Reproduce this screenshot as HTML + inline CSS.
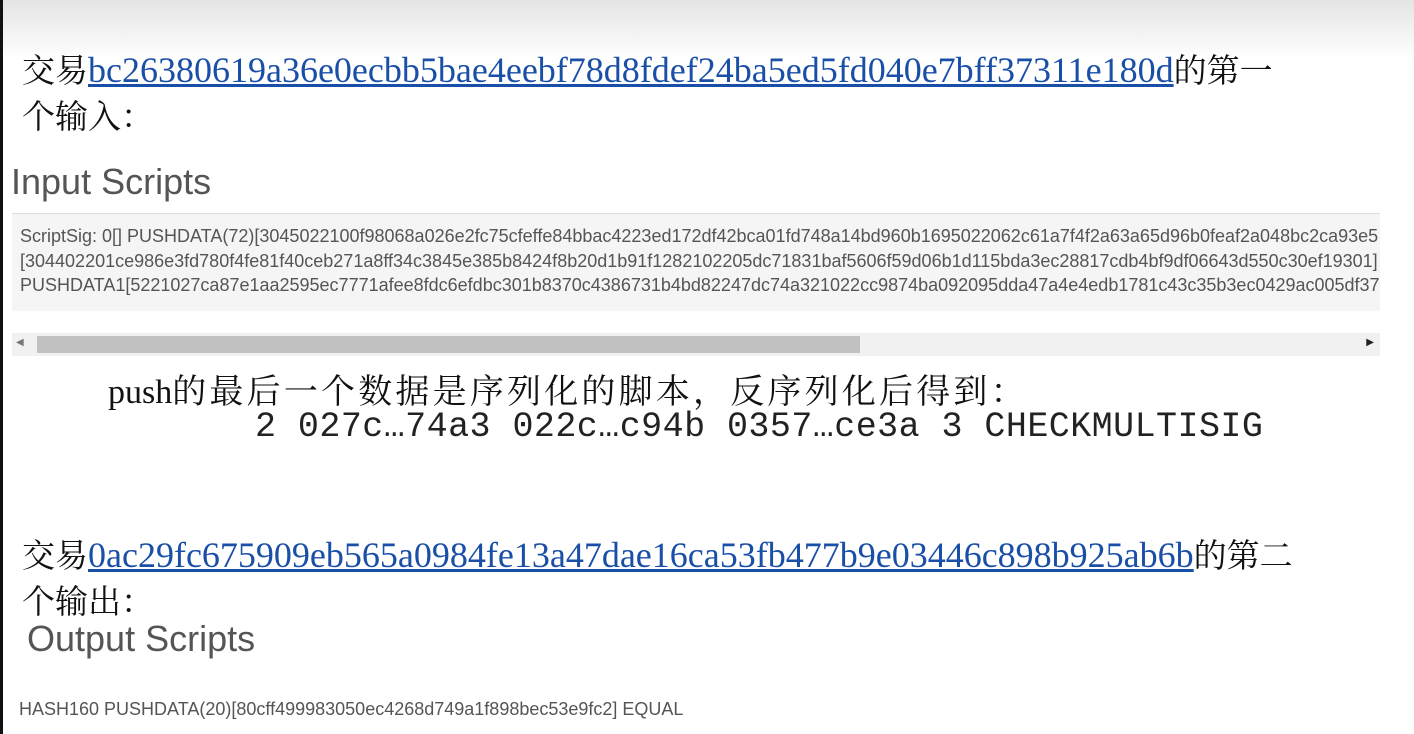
<!DOCTYPE html>
<html><head><meta charset="utf-8"><style>
html,body{margin:0;padding:0;width:1414px;height:734px;overflow:hidden;background:#fff;position:relative}
.lb{position:absolute;left:0;top:0;width:3px;height:734px;background:#111}
.top{position:absolute;left:3px;top:0;width:1411px;height:60px;background:linear-gradient(#e4e4e4,#fff)}
.a{position:absolute;white-space:nowrap}
.cn{font-family:"Liberation Serif","Noto Serif CJK SC",serif;font-size:33px;color:#111}
.cn a{color:#1a4fa8;text-decoration:underline;font-size:36px}
.h{font-family:"Liberation Sans",sans-serif;font-size:36px;color:#555}
.box{position:absolute;left:12px;top:213px;width:1368px;height:97px;background:#f5f5f5;border-top:1px solid #ddd;overflow:hidden}
.sc{font-family:"Liberation Sans",sans-serif;font-size:18px;color:#555;line-height:24.5px;position:absolute;left:8px;top:10px;white-space:nowrap;letter-spacing:0px}
.track{position:absolute;left:12px;top:333px;width:1368px;height:23px;background:#f1f1f1}
.thumb{position:absolute;left:25px;top:3px;width:823px;height:17px;background:#c1c1c1}
</style></head><body>
<div class="top"></div>
<div class="lb"></div>
<div class="a cn" style="left:22px;top:45px">交易<a>bc26380619a36e0ecbb5bae4eebf78d8fdef24ba5ed5fd040e7bff37311e180d</a>的第一</div>
<div class="a cn" style="left:22px;top:91px">个输入：</div>
<div class="a h" style="left:11px;top:161px">Input Scripts</div>
<div class="box"><div class="sc">ScriptSig: 0[] PUSHDATA(72)[3045022100f98068a026e2fc75cfeffe84bbac4223ed172df42bca01fd748a14bd960b1695022062c61a7f4f2a63a65d96b0feaf2a048bc2ca93e5<br>[304402201ce986e3fd780f4fe81f40ceb271a8ff34c3845e385b8424f8b20d1b91f1282102205dc71831baf5606f59d06b1d115bda3ec28817cdb4bf9df06643d550c30ef19301]<br>PUSHDATA1[5221027ca87e1aa2595ec7771afee8fdc6efdbc301b8370c4386731b4bd82247dc74a321022cc9874ba092095dda47a4e4edb1781c43c35b3ec0429ac005df37</div></div>
<div class="track"><div class="thumb"></div><span style="position:absolute;left:4px;top:4px;font-size:10px;color:#777">◀</span><span style="position:absolute;right:6px;top:4px;font-size:10px;color:#222">▶</span></div>
<div class="a cn" style="left:108px;top:364px;font-size:34px">push<span style="letter-spacing:3.2px">的最后一个数据是序列化的脚本，反序列化后得到：</span></div>
<div class="a" style="left:255px;top:407px;font-family:'Liberation Mono',monospace;font-size:35px;color:#222;letter-spacing:0.45px">2 027c…74a3 022c…c94b 0357…ce3a 3 CHECKMULTISIG</div>
<div class="a cn" style="left:22px;top:530px">交易<a>0ac29fc675909eb565a0984fe13a47dae16ca53fb477b9e03446c898b925ab6b</a>的第二</div>
<div class="a cn" style="left:22px;top:576px">个输出：</div>
<div class="a h" style="left:27px;top:618px">Output Scripts</div>
<div class="a" style="left:19px;top:699px;font-family:'Liberation Sans',sans-serif;font-size:18px;color:#555">HASH160 PUSHDATA(20)[80cff499983050ec4268d749a1f898bec53e9fc2] EQUAL</div>
</body></html>
